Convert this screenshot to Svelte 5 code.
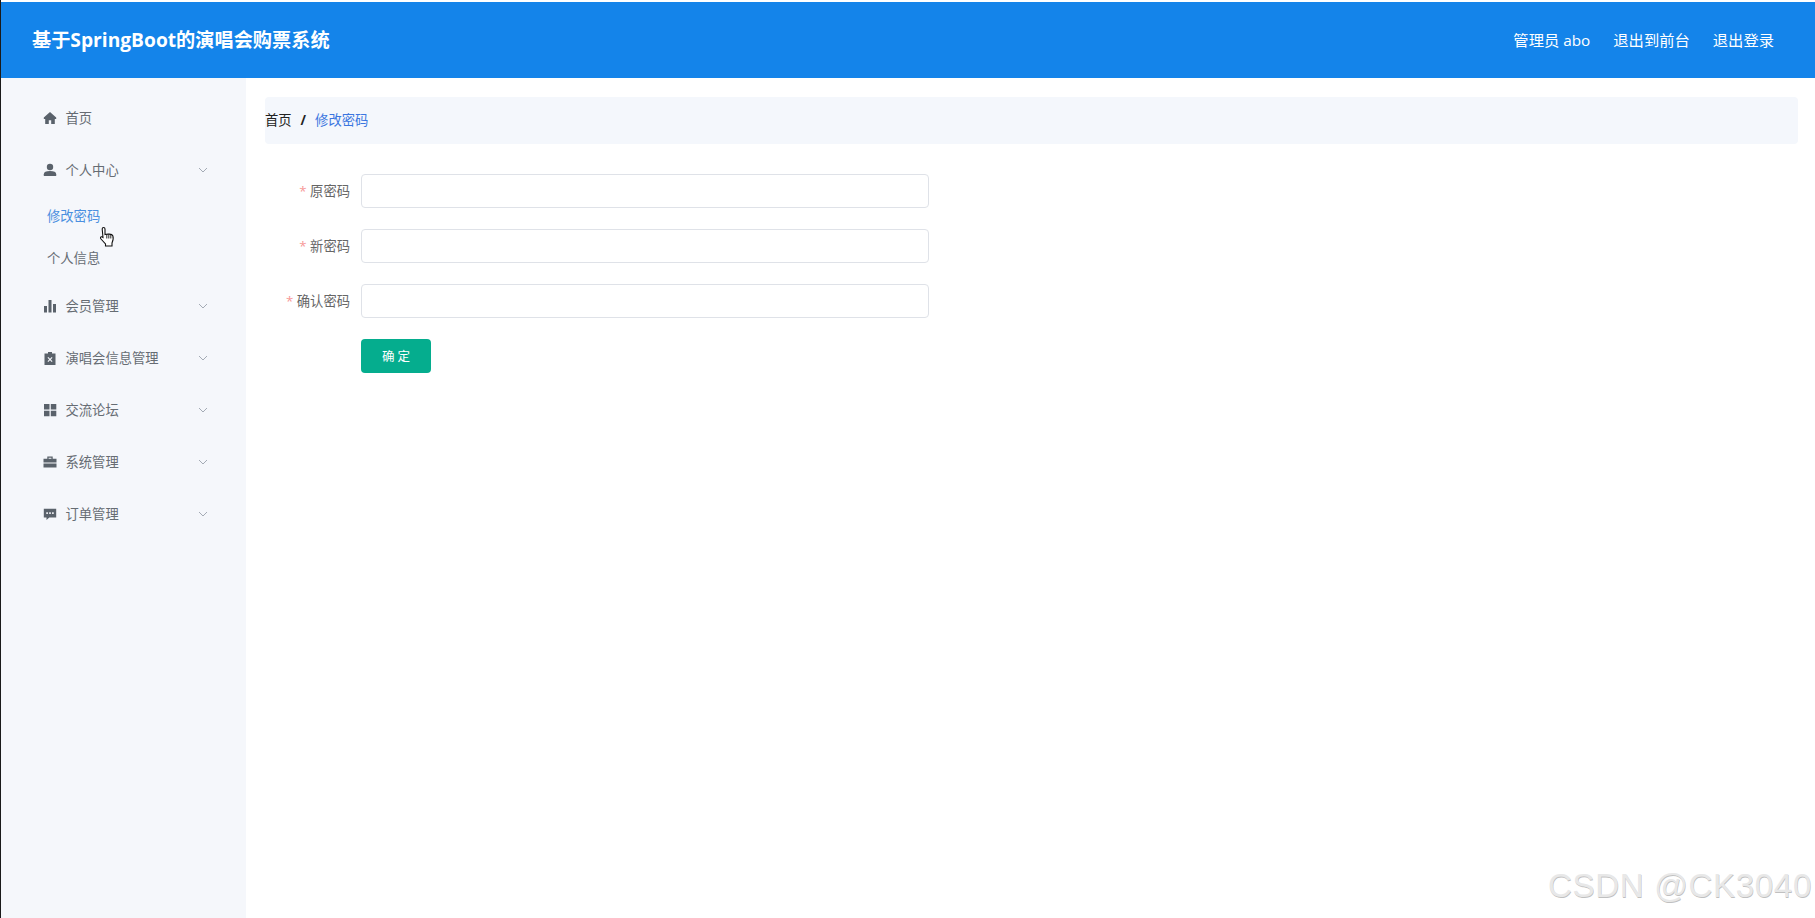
<script>
    const groups = [
        { name: '首页', icon: 'home' },
        { name: '个人中心', icon: 'user', arrow: true, children: ['修改密码', '个人信息'] },
        { name: '会员管理', icon: 'chart', arrow: true },
        { name: '演唱会信息管理', icon: 'clip', arrow: true },
        { name: '交流论坛', icon: 'grid', arrow: true },
        { name: '系统管理', icon: 'case', arrow: true },
        { name: '订单管理', icon: 'chat', arrow: true }
    ];
    const fields = ['原密码', '新密码', '确认密码'];
</script>

<div class="page">
    <header class="top">
        <div class="title">基于SpringBoot的演唱会购票系统</div>
        <nav class="links">
            <span>管理员 abo</span>
            <span>退出到前台</span>
            <span>退出登录</span>
        </nav>
    </header>

    <div class="body">
        <aside class="side">
            {#each groups as g}
                <div class="item">
                    <svg class="icon" viewBox="0 0 14 14" fill="#5a626b">
                        {#if g.icon === 'home'}
                            <path d="M7 1 .8 6.600V8h1.400v5h3.600V9.200h2.400V13h3.600V8h1.400V6.600z" />
                        {:else if g.icon === 'user'}
                            <circle cx="7" cy="4" r="3.200" />
                            <path d="M.8 13v-1.800C.8 9 3 8 7 8s6.200 1 6.200 3.200V13z" />
                        {:else if g.icon === 'chart'}
                            <path d="M1 7h3v6.500H1zM5.500 1h3v12.500h-3zM10 5h3v8.500h-3z" />
                        {:else if g.icon === 'clip'}
                            <path fill-rule="evenodd" d="M1.500 2.500H5V1h4v1.500h3.500V14h-11zM5.300 6l-.8.8L6.200 8.500 4.500 10.200l.8.8L7 9.300 8.700 11l.8-.8L7.800 8.500 9.500 6.800 8.700 6 7 7.700z" />
                        {:else if g.icon === 'grid'}
                            <path d="M1 1h5.500v5.500H1zM7.800 1h5.500v5.500H7.800zM1 7.800h5.500v5.500H1zM7.800 7.800h5.500v5.500H7.800z" />
                        {:else if g.icon === 'case'}
                            <path fill-rule="evenodd" d="M4.300 3.800V1.500h5.400v2.300h3.800v3.700H.5V3.800zM5.600 2.800v1h2.800v-1zM.5 8.400h13v4.100H.5z" />
                        {:else}
                            <path fill-rule="evenodd" d="M.8 1.800h12.400v8.700H6.300L3.500 13v-2.500H.8zM3.300 5.300v1.600h1.600V5.300zM6.200 5.300v1.600h1.600V5.300zM9.100 5.300v1.600h1.600V5.300z" />
                        {/if}
                    </svg>
                    <span class="txt">{g.name}</span>
                    {#if g.arrow}
                        <svg class="arrow" viewBox="0 0 10 6" fill="none" stroke="#a4abb5" stroke-width="1">
                            <path d="M1 1l4 4 4-4" />
                        </svg>
                    {/if}
                </div>
                {#if g.children}
                    <div class="subs">
                        {#each g.children as c, i}
                            <div class="sub" class:active={i === 0}>{c}</div>
                        {/each}
                    </div>
                {/if}
            {/each}
        </aside>

        <main class="main">
            <div class="crumb">
                <span class="home">首页</span>
                <span class="sep">/</span>
                <span class="cur">修改密码</span>
            </div>

            <form class="form">
                {#each fields as f}
                    <div class="row">
                        <label class="label" for={f}><i>*</i> {f}</label>
                        <input id={f} class="input" type="password" />
                    </div>
                {/each}
                <div class="row">
                    <span class="label"></span>
                    <button class="btn" type="button">确 定</button>
                </div>
            </form>
        </main>
    </div>

    <svg class="cursor" viewBox="0 0 16 22">
        <path d="M4.500 1.500c1 0 1.500.6 1.500 1.500v5.500c1.800-.5 7-.8 7.800 1.200.6 1.500.2 5-.8 7.300V20H6.500v-2L2 13c-1-1.200-.5-2.400.8-2.200L4 11.500 3.200 3c0-1 .4-1.500 1.300-1.500z" fill="#fff" stroke="#111" stroke-width="1.100" />
        <path d="M7.800 8.500v4M9.800 8.500v4M11.800 9v3.500" stroke="#111" stroke-width=".9" fill="none" />
    </svg>

    <div class="mark">CSDN @CK3040</div>
</div>

<style>
    :global(body) {
        margin: 0;
        background: #fff;
    }
    .page {
        position: relative;
        height: 918px;
        overflow: hidden;
        box-sizing: border-box;
        padding-top: 2px;
        border-left: 1px solid #1a1a1a;
        font-family: 'Open Sans', 'Noto Sans CJK SC', sans-serif;
        line-height: 20px;
    }
    .top {
        height: 76px;
        background: #1484ea;
        color: #fff;
        display: flex;
        align-items: center;
        justify-content: space-between;
        padding: 0 41px 0 31px;
    }
    .title {
        font-size: 19.2px;
        font-weight: 700;
    }
    .links {
        display: flex;
        gap: 23px;
        font-size: 15.3px;
    }
    .body {
        display: flex;
        height: 840px;
    }
    .side {
        width: 245px;
        background: #f5f7fb;
        padding-top: 14px;
        box-sizing: border-box;
        font-size: 13.3px;
        color: #666c73;
    }
    .item {
        height: 52px;
        display: flex;
        align-items: center;
        padding-left: 42px;
        position: relative;
    }
    .icon {
        width: 14px;
        height: 14px;
        margin-right: 8.500px;
    }
    .arrow {
        position: absolute;
        left: 197px;
        top: 23px;
        width: 10px;
        height: 6px;
    }
    .sub {
        height: 42px;
        line-height: 40px;
        padding-left: 46px;
    }
    .active {
        color: #4a8fe0;
    }
    .main {
        flex: 1;
        padding: 19px 17px 0 19px;
    }
    .crumb {
        height: 47px;
        box-sizing: border-box;
        padding-bottom: 2px;
        background: #f4f7fc;
        border-radius: 4px;
        display: flex;
        align-items: center;
        font-size: 13.3px;
    }
    .home {
        color: #222;
    }
    .sep {
        color: #222;
        font-weight: 700;
        margin: 0 9px;
    }
    .cur {
        color: #3b76e0;
    }
    .form {
        padding-top: 30px;
    }
    .row {
        display: flex;
        align-items: center;
        margin-bottom: 21px;
    }
    .label {
        width: 96px;
        flex: none;
        box-sizing: border-box;
        padding-right: 11px;
        text-align: right;
        font-size: 13.3px;
        color: #666;
    }
    .label i {
        color: #f56c6c;
        font-style: normal;
        opacity: .7;
    }
    .input {
        width: 568px;
        height: 34px;
        box-sizing: border-box;
        border: 1px solid #dfe2e8;
        border-radius: 4px;
        background: #fff;
    }
    .btn {
        width: 70px;
        height: 34px;
        border: 0;
        border-radius: 4px;
        background: #05ad8e;
        color: #fff;
        font-size: 12.500px;
        padding-bottom: 2px;
        font-family: inherit;
    }
    .cursor {
        position: absolute;
        left: 98px;
        top: 226px;
        width: 16px;
        height: 22px;
    }
    .mark {
        position: absolute;
        right: 3px;
        top: 867px;
        line-height: 38px;
        font-family: 'Liberation Sans', sans-serif;
        font-size: 33.200px;
        color: #e8e8e8;
        letter-spacing: .6px;
        text-shadow: .5px .5px .5px #c0c0c0;
    }
</style>
